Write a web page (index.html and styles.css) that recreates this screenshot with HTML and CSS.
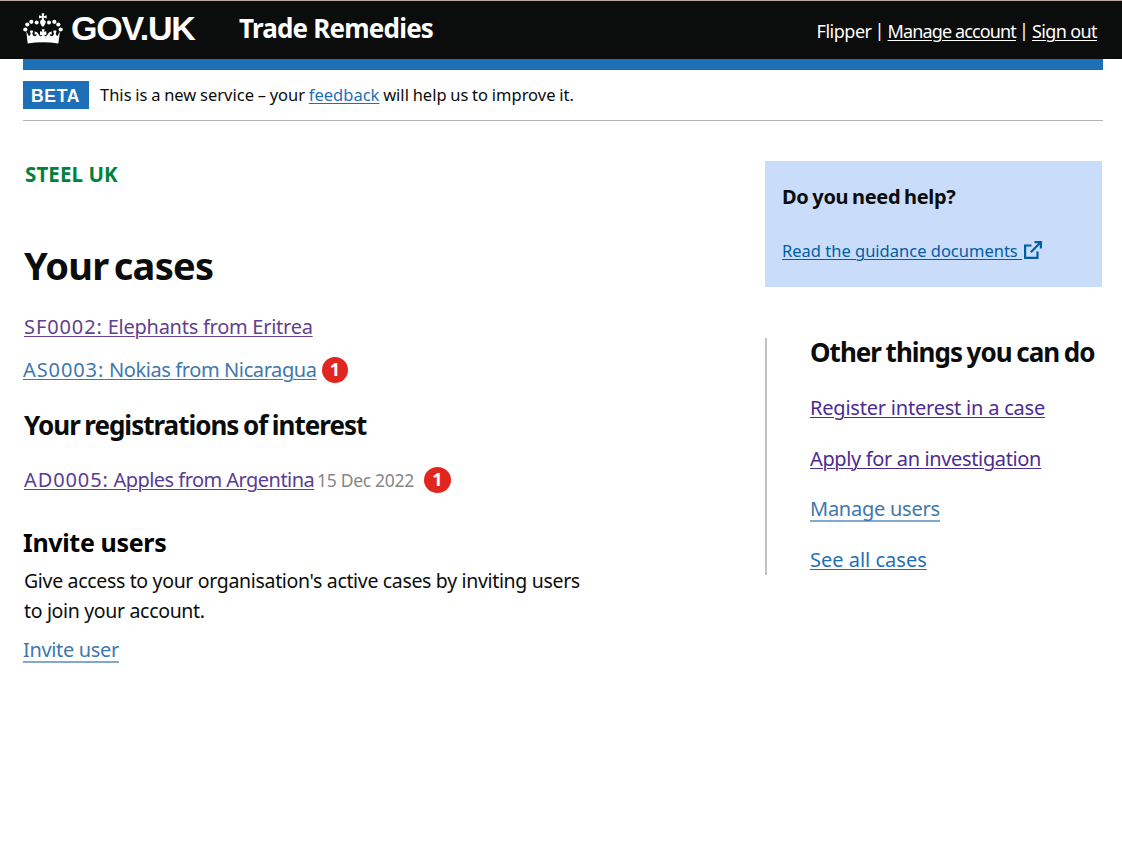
FILE: index.html
```html
<!DOCTYPE html>
<html lang="en">
<head>
<meta charset="utf-8">
<title>Trade Remedies</title>
<link rel="stylesheet" href="styles.css">
</head>
<body>
<header class="header">
  <svg class="crown" viewBox="24 22 120 92" fill="#fff" aria-hidden="true">
    <circle cx="31" cy="71" r="6.3"/><circle cx="37" cy="56" r="6.3"/><circle cx="49" cy="48" r="6.3"/><circle cx="65" cy="50" r="6"/>
    <circle cx="102" cy="50" r="6"/><circle cx="118" cy="48" r="6.3"/><circle cx="130" cy="56" r="6.3"/><circle cx="137" cy="71" r="6.3"/>
    <path d="M80 22h8l-2 9 9-3v10l-9-3 1 7q8 4 4 11l-5 9h-5l-5-9q-3-8 4-11l1-7-9 3V28l9 3z"/>
    <path d="M34 76l8 15q5-4 5-9-5-4-1-8h7q3 4-1 8 1 9 8 9 5-1 5-6l-6 1v-9l7 2q5 6 9 12 6 1 7-4l-7 1V76l7 2-2-8h9l-2 8 7-2v12l-7-1q1 5 7 4 4-6 9-12l7-2v9l-6-1q0 5 5 6 7 0 8-9-4-4-1-8h7q4 4-1 8 0 5 5 9l8-15-5 37q-46-7-92 0z"/>
  </svg>
  <span class="logo">GOV.UK</span>
  <span class="service">Trade Remedies</span>
  <nav class="account"><span class="user">Flipper</span><span class="sep">|</span><a href="#" class="manage">Manage account</a><span class="sep">|</span><a href="#" class="signout">Sign out</a></nav>
</header>
<div class="container">
  <div class="bar"></div>
  <div class="phase"><strong class="tag">BETA</strong><span class="phase-text">This is a new service – your <a href="#">feedback</a> will help us to improve it.</span></div>
  <main class="main">
    <section class="left">
      <p class="org">STEEL UK</p>
      <h1 class="title">Your cases</h1>
      <p class="row case-elephants"><a href="#" class="visited"><span class="code">SF0002:</span> Elephants from Eritrea</a></p>
      <p class="row case-nokias"><a href="#" class="case-link"><span class="code">AS0003:</span> Nokias from Nicaragua</a><b class="badge">1</b></p>
      <h2 class="interest">Your registrations of interest</h2>
      <p class="row case-apples"><a href="#" class="visited"><span class="code">AD0005:</span> Apples from Argentina</a><span class="date">15 Dec 2022</span><b class="badge">1</b></p>
      <h2 class="invite">Invite users</h2>
      <p class="copy">Give access to your organisation's active cases by inviting users<br>to join your account.</p>
      <p class="row invite-link"><a href="#" class="ruled">Invite user</a></p>
    </section>
    <aside class="right">
      <div class="help">
        <h3 class="help-title">Do you need help?</h3>
        <a href="#" class="guide"><span class="guide-text">Read the guidance documents </span><svg class="external" viewBox="0 0 18 18" fill="none" stroke="#005ea5" stroke-width="2.2" aria-hidden="true"><path d="M7.5 4.5H1.1v12.4h12.4v-6.4M6.8 11.2L16 2M10.5 1.1h6.4v6.4"/></svg></a>
      </div>
      <div class="other">
        <h2 class="other-title">Other things you can do</h2>
        <p class="row register"><a href="#" class="visited">Register interest in a case</a></p>
        <p class="row apply"><a href="#" class="visited">Apply for an investigation</a></p>
        <p class="row manage-users"><a href="#" class="ruled">Manage users</a></p>
        <p class="row all-cases"><a href="#">See all cases</a></p>
      </div>
    </aside>
  </main>
</div>
</body>
</html>
```

FILE: styles.css
```css
body {
  margin: 0;
  background: #fff;
  color: #0b0c0c;
  font-family: "Noto Sans", sans-serif;
  white-space: nowrap;
}
p, h1, h2, h3 { margin: 0; }
a {
  color: #1d70b8;
  text-decoration: underline;
  text-decoration-thickness: 1px;
  text-underline-offset: 2px;
}

.header {
  display: flex;
  height: 58px;
  border-top: 1px solid #b9a9a0;
  background: #0b0c0c;
  color: #fff;
  padding: 0 25px 0 23px;
}
.crown { width: 40px; height: 31px; margin-top: 12px; }
.logo {
  width: 124px;
  margin: 7px 0 0 8px;
  font: bold 34px/40px "Liberation Sans", sans-serif;
  letter-spacing: -1.25px;
}
.service {
  margin: 8px 0 0 44px;
  font-size: 26px;
  font-weight: 700;
  line-height: 38px;
  letter-spacing: -0.8px;
}
.account {
  display: flex;
  margin-left: auto;
  padding-top: 14px;
  font-size: 18px;
  line-height: 32px;
}
.account a { color: #fff; }
.user { letter-spacing: -0.48px; }
.sep { width: 16px; text-align: center; line-height: 30px; }
.manage { letter-spacing: -0.87px; }
.signout { letter-spacing: -0.61px; }

.container { width: 1080px; margin-left: 23px; }
.bar { height: 11px; background: #1d70b8; }
.phase {
  display: flex;
  height: 50px;
  border-bottom: 1px solid #b1b4b6;
}
.tag {
  box-sizing: border-box;
  width: 66px;
  height: 28px;
  margin-top: 11px;
  padding-left: 8px;
  background: #1d70b8;
  color: #fff;
  font: bold 17.5px/30px "Liberation Sans", sans-serif;
  letter-spacing: 0.7px;
}
.phase-text {
  margin: 11px 0 0 11px;
  font-size: 16.5px;
  line-height: 28px;
  word-spacing: -0.55px;
}

.main { display: flex; justify-content: space-between; }
.left { width: 600px; }
.row { font-size: 20px; line-height: 30px; }
.org {
  margin: 39px 0 0 2px;
  color: #00823b;
  font-size: 20.5px;
  font-weight: 700;
  line-height: 28px;
  letter-spacing: 0.1px;
}
.title {
  margin: 53px 0 23px 1px;
  font-size: 38px;
  line-height: 48px;
  letter-spacing: -0.7px;
  word-spacing: -4px;
}
.visited { color: #4c2c92; }
.case-elephants { margin-left: 1px; letter-spacing: -0.26px; }
.case-elephants .visited { color: #62418f; }
.code { letter-spacing: 0.9px; }
.case-nokias { display: flex; margin: 13px 0 23px; letter-spacing: -0.4px; }
.case-link { width: 294px; color: #4077ac; }
.badge {
  width: 26px;
  height: 26px;
  margin: 2px 0 0 5px;
  border-radius: 50%;
  background: #e1251f;
  color: #fff;
  font-size: 18px;
  font-weight: 700;
  line-height: 25px;
  text-align: center;
  letter-spacing: 0;
}
.interest {
  margin-left: 1px;
  font-size: 26px;
  line-height: 34px;
  letter-spacing: -1px;
  word-spacing: -1.2px;
}
.case-apples { display: flex; margin: 23px 0 29px 1px; letter-spacing: -0.54px; }
.case-apples .visited { width: 290px; color: #5a3c94; }
.date {
  margin-left: 3px;
  color: #868686;
  font-size: 17.5px;
  line-height: 31px;
  letter-spacing: -0.3px;
}
.case-apples .badge { margin: 2px 0 0 10px; width: 27px; }
.invite { color: #000; font-size: 25px; line-height: 34px; letter-spacing: -0.34px; }
.copy {
  margin: 7px 0 8px 1px;
  font-size: 19.5px;
  line-height: 30px;
  letter-spacing: -0.33px;
}
.ruled {
  display: inline-block;
  height: 27px;
  border-bottom: 2px solid #82a8cd;
  color: #4077ac;
  text-decoration: none;
  line-height: 31px;
}
.invite-link { height: 30px; letter-spacing: -0.35px; }

.right { width: 338px; padding-top: 40px; }
.help {
  box-sizing: border-box;
  width: 337px;
  height: 126px;
  padding: 22px 0 0 17px;
  background: #c9dcfa;
}
.help-title { font-size: 20px; line-height: 28px; letter-spacing: -0.34px; word-spacing: -1px; }
.guide {
  display: flex;
  margin-top: 26px;
  color: #005ea5;
  font-size: 16.5px;
  line-height: 28px;
}
.guide-text { width: 242px; white-space: pre; }
.external { width: 18px; height: 18px; margin-top: 4px; }
.other {
  box-sizing: border-box;
  height: 237px;
  margin-top: 51px;
  padding: 0 0 0 43px;
  border-left: 2px solid #bfc1c3;
}
.other-title { font-size: 26px; line-height: 28px; letter-spacing: -0.98px; word-spacing: -1.2px; }
.register { margin-top: 27px; letter-spacing: -0.21px; }
.apply { margin-top: 21px; letter-spacing: -0.36px; }
.manage-users { height: 30px; margin-top: 19px; letter-spacing: -0.25px; }
.all-cases { margin-top: 22px; }
```
